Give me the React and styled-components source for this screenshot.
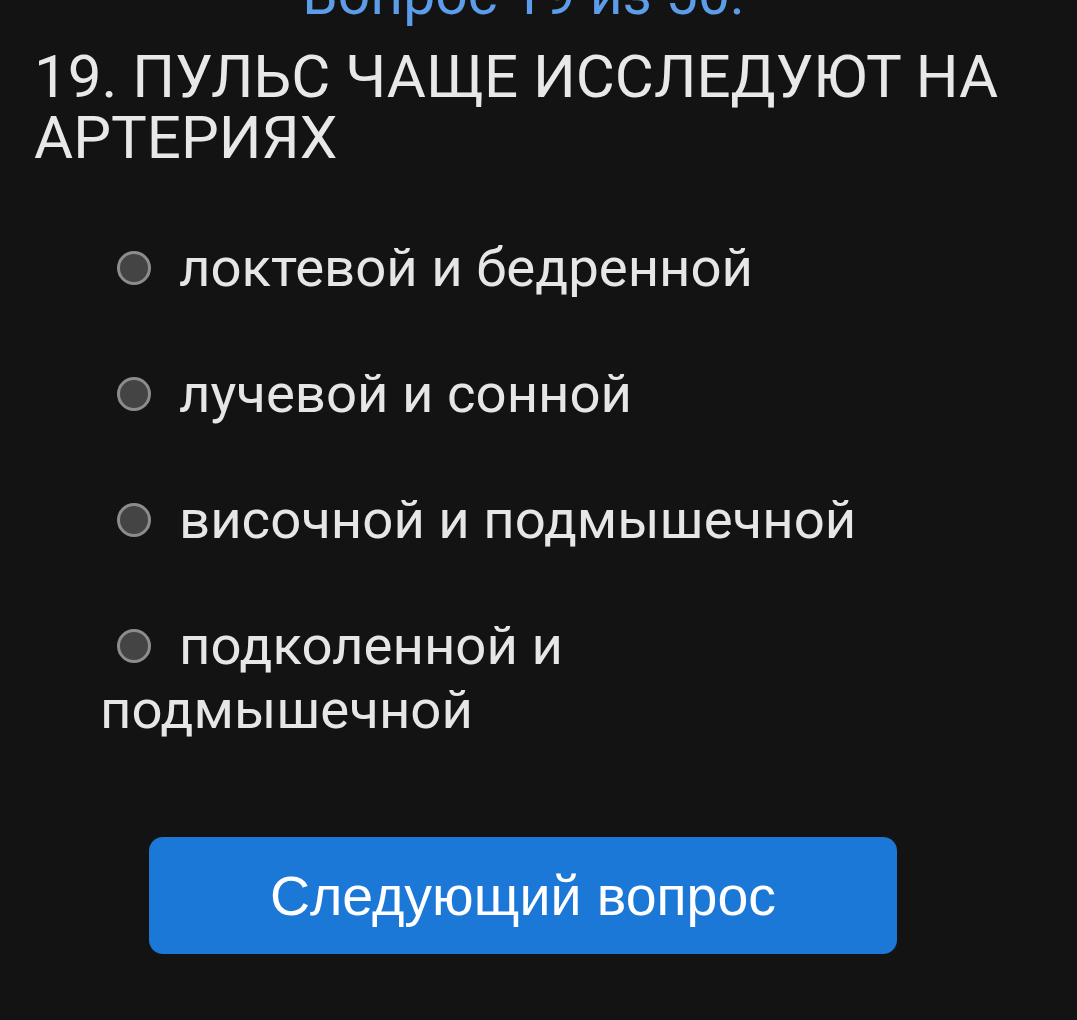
import React, { useState } from 'react';
import styled, { createGlobalStyle } from 'styled-components';

const GlobalStyle = createGlobalStyle`
  html, body {
    margin: 0;
    padding: 0;
    background: #131313;
    overflow: hidden;
  }
  body {
    font-family: Roboto, "Noto Sans", "Liberation Sans", sans-serif;
  }
`;

const Page = styled.div`
  min-height: 1020px;
  padding: 0 65px 0 34px;
  background: #131313;
  overflow: hidden;
`;

const Counter = styled.div`
  margin-top: -39px;
  text-align: center;
  font-size: 57px;
  line-height: normal;
  color: #5c9ce8;
`;

const Question = styled.h2`
  margin: 18px 0 67px;
  font-size: 60px;
  font-weight: 400;
  line-height: 61px;
  color: #e8e8e8;
`;

const Options = styled.div`
  padding: 0 110px 0 66px;
`;

const Option = styled.label`
  display: block;
  margin-bottom: 62px;
  font-size: 54.5px;
  line-height: normal;
  color: #e6e6e6;
  cursor: pointer;
`;

const Radio = styled.span`
  display: inline-block;
  box-sizing: border-box;
  width: 34px;
  height: 34px;
  margin: 0 28px 0 17px;
  border-radius: 50%;
  border: 3px solid #8c8c8c;
  background: ${p => (p.$checked ? '#1e78d6' : '#444444')};
  vertical-align: 1px;
`;

const NextButton = styled.button`
  display: block;
  width: 748px;
  height: 117px;
  margin: 96px auto 0;
  border: none;
  border-radius: 14px;
  background: #1c78d6;
  color: #ffffff;
  font-family: "Liberation Sans", Arial, sans-serif;
  font-size: 55.5px;
  cursor: pointer;
`;

const answers = [
  'локтевой и бедренной',
  'лучевой и сонной',
  'височной и подмышечной',
  'подколенной и подмышечной',
];

export default function App() {
  const [picked, setPicked] = useState(null);

  return (
    <>
      <GlobalStyle />
      <Page>
        <Counter>Вопрос 19 из 50:</Counter>
        <Question>19. ПУЛЬС ЧАЩЕ ИССЛЕДУЮТ НА АРТЕРИЯХ</Question>
        <Options>
          {answers.map((a, i) => (
            <Option key={a} onClick={() => setPicked(i)}>
              <Radio $checked={picked === i} />
              {a}
            </Option>
          ))}
        </Options>
        <NextButton>Следующий вопрос</NextButton>
      </Page>
    </>
  );
}
